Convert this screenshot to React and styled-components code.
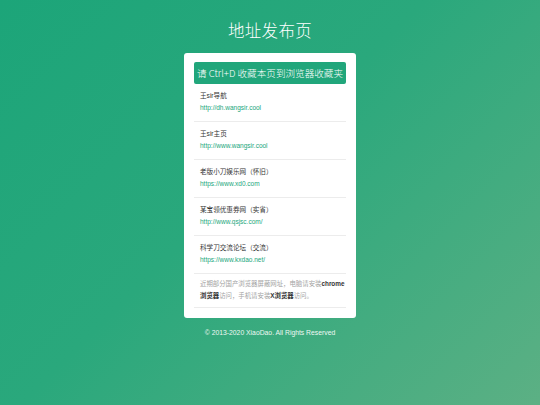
import * as React from 'react';
import styled, { createGlobalStyle } from 'styled-components';

const Global = createGlobalStyle`
  html, body {
    margin: 0;
    padding: 0;
    height: 100%;
  }
  body {
    font-family: "Liberation Sans", Arial, "Noto Sans CJK SC", sans-serif;
    background: linear-gradient(135deg, #1ca579 0%, #2aa87c 45%, #5cb084 100%);
    min-height: 405px;
  }
`;

const Page = styled.div`
  width: 540px;
  height: 405px;
  display: flex;
  flex-direction: column;
  align-items: center;
`;

const Title = styled.h1`
  margin: 18px 0 0;
  height: 24px;
  font-family: "Noto Sans CJK SC", sans-serif;
  font-size: 16.5px;
  font-weight: 300;
  line-height: 24px;
  color: #fff;
  letter-spacing: 0.3px;
`;

const Card = styled.div`
  margin-top: 11px;
  width: 172px;
  box-sizing: border-box;
  padding: 9px 10px 10px;
  background: #fff;
  border-radius: 3px;
`;

const Banner = styled.div`
  height: 22px;
  background: #21a67b;
  border-radius: 2px;
  color: #fff;
  font-family: "Noto Sans CJK SC", sans-serif;
  font-size: 9.6px;
  font-weight: 300;
  line-height: 22px;
  text-align: center;
  white-space: nowrap;
`;

const List = styled.ul`
  list-style: none;
  margin: 0;
  padding: 0;
`;

const Item = styled.li`
  padding: 6px 6px 7px;
  border-bottom: 1px solid #ececec;
`;

const Name = styled.div`
  font-size: 6.6px;
  line-height: 12px;
  color: #333;
`;

const Url = styled.a`
  display: block;
  font-size: 6.5px;
  line-height: 12px;
  color: #21a67b;
  text-decoration: none;
`;

const Notice = styled.p`
  margin: 0;
  padding: 4px 0 5px 6px;
  border-bottom: 1px solid #ececec;
  font-size: 6.4px;
  line-height: 12px;
  color: #a3a3a3;

  b {
    color: #333;
  }
`;

const Footer = styled.footer`
  margin-top: 10px;
  font-size: 6.8px;
  line-height: 10px;
  color: #eef8f3;
`;

const sites = [
  { name: '王sir导航', url: 'http://dh.wangsir.cool' },
  { name: '王sir主页', url: 'http://www.wangsir.cool' },
  { name: '老版小刀娱乐网（怀旧）', url: 'https://www.xd0.com' },
  { name: '某宝领优惠券网（实省）', url: 'http://www.qsjsc.com/' },
  { name: '科学刀交流论坛（交流）', url: 'https://www.kxdao.net/' },
];

export default function App() {
  return (
    <>
      <Global />
      <Page>
        <Title>地址发布页</Title>
        <Card>
          <Banner>请 Ctrl+D 收藏本页到浏览器收藏夹</Banner>
          <List>
            {sites.map((s) => (
              <Item key={s.url}>
                <Name>{s.name}</Name>
                <Url href={s.url}>{s.url}</Url>
              </Item>
            ))}
          </List>
          <Notice>
            近期部分国产浏览器屏蔽网址，电脑请安装<b>chrome浏览器</b>访问，手机请安装<b>X浏览器</b>访问。
          </Notice>
        </Card>
        <Footer>© 2013-2020 XiaoDao. All Rights Reserved</Footer>
      </Page>
    </>
  );
}
